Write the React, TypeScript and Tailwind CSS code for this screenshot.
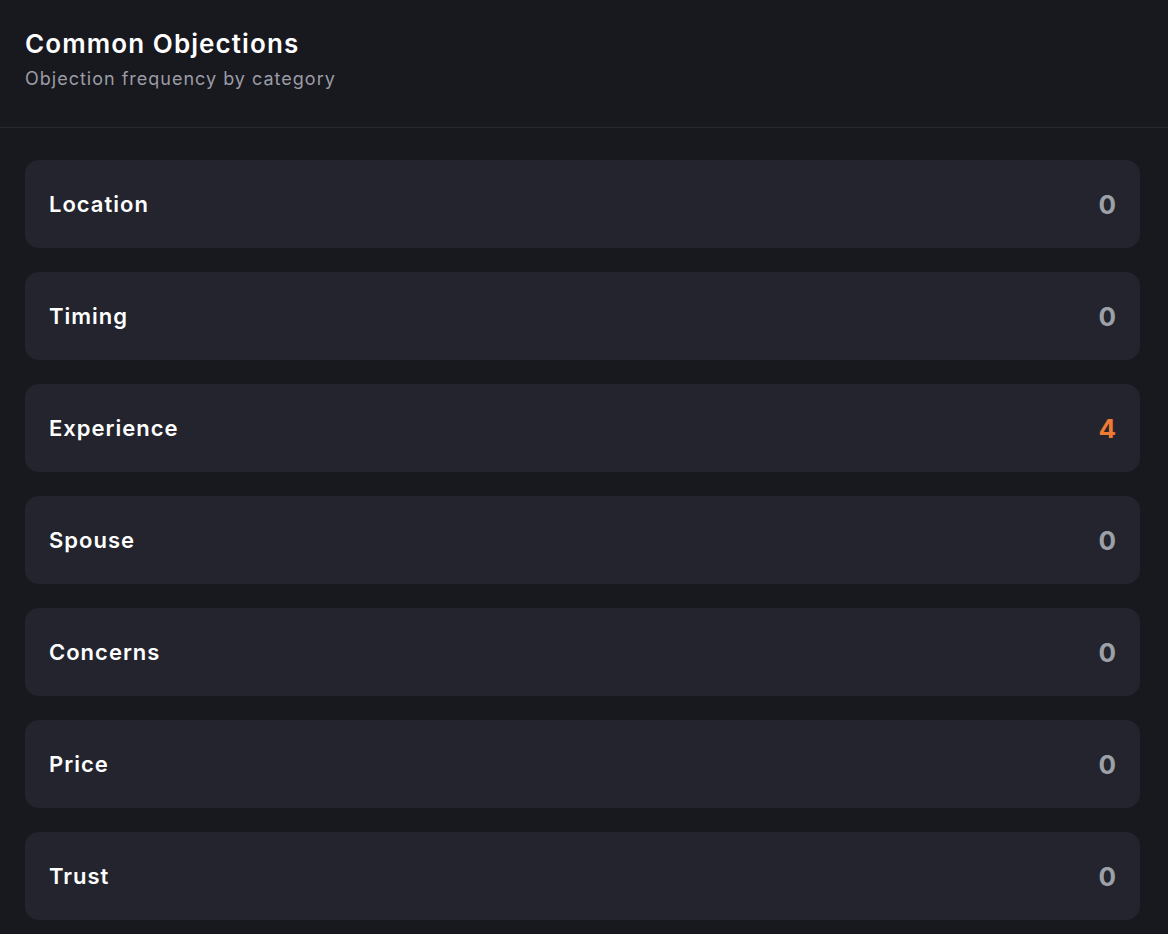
const objections = [
  { label: 'Location', count: 0 },
  { label: 'Timing', count: 0 },
  { label: 'Experience', count: 4 },
  { label: 'Spouse', count: 0 },
  { label: 'Concerns', count: 0 },
  { label: 'Price', count: 0 },
  { label: 'Trust', count: 0 },
]

export default function App() {
  return (
    <div
      className="min-h-screen w-full bg-[#18181f] text-white"
      style={{ fontFamily: 'Inter, "Noto Sans", sans-serif' }}
    >
      {/* Header */}
      <div className="pl-[25px] pr-[28px] pt-[28px] pb-[34px] border-b border-[#272830]">
        <h2 className="text-[26px] leading-[32px] font-semibold tracking-[1.1px] text-white">Common Objections</h2>
        <p className="mt-[5px] text-[18px] leading-[28px] tracking-[1px] text-[#9b9ca5]">Objection frequency by category</p>
      </div>

      {/* List */}
      <div className="flex flex-col gap-[24px] pl-[25px] pr-[28px] pt-[32px] pb-[24px]">
        {objections.map((o) => (
          <div
            key={o.label}
            className="flex h-[88px] items-center justify-between rounded-[14px] bg-[#23242d] px-[24px]"
          >
            <span className="text-[22px] font-semibold tracking-[1px] text-white">{o.label}</span>
            <span
              className={
                o.count > 0
                  ? 'text-[26px] font-bold text-[#ee7a33]'
                  : 'text-[26px] font-bold text-[#9ca0a8]'
              }
            >
              {o.count}
            </span>
          </div>
        ))}
      </div>
    </div>
  )
}
